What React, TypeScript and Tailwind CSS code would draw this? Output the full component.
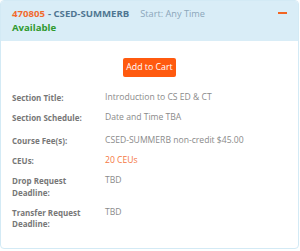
const rowsA = [
  { label: "Section Title:", value: "Introduction to CS ED & CT" },
  { label: "Section Schedule:", value: "Date and Time TBA" },
];

const rowsB = [
  { label: "Course Fee(s):", value: "CSED-SUMMERB non-credit $45.00" },
  { label: "CEUs:", value: "20 CEUs", accent: true },
  { label: "Drop Request Deadline:", value: "TBD" },
  { label: "Transfer Request Deadline:", value: "TBD" },
];

function Row({ label, value, accent }: { label: string; value: string; accent?: boolean }) {
  return (
    <div className="grid grid-cols-[93px_1fr] text-[8px] leading-[11.5px]">
      <div className="w-[70px] font-bold text-[#777777]">{label}</div>
      <div className={accent ? "text-[8.6px] text-[#f5773f]" : "text-[8.6px] text-[#8a8a8a]"}>{value}</div>
    </div>
  );
}

export default function App() {
  return (
    <div className="h-[251px] w-[300px] bg-white font-['Open_Sans',sans-serif]">
      <div className="h-[249px] w-[299px] overflow-hidden rounded-[4px] border border-[#d3eaf5] bg-white">
        <div className="relative h-[40px] bg-[#d9edf7] px-[11px] pt-[6px] text-[9.6px] leading-[14px]">
          <div className="flex items-center">
            <span className="font-bold text-[#f26a2e]">470805</span>
            <span className="ml-[3px] font-bold text-[#4f7692]">- CSED-SUMMERB</span>
            <span className="ml-[11px] text-[9.2px] text-[#8ba6ba]">Start: Any Time</span>
          </div>
          <div className="font-bold text-[#2f9a2f]">Available</div>
          <span className="absolute left-[277px] top-[11px] h-[2px] w-[9px] bg-[#f26522]" />
        </div>
        <div className="flex flex-col px-[11px] pt-[17px]">
          <div className="flex justify-center">
            <button className="h-[19px] w-[53px] rounded-[2px] bg-[#ff5a0f] text-[8.8px] text-white">
              Add to Cart
            </button>
          </div>
          <div className="mt-[15px] flex flex-col gap-[8.5px]">
            {rowsA.map((r) => (
              <Row key={r.label} {...r} />
            ))}
          </div>
          <div className="mt-[11.5px] flex flex-col gap-[8.5px]">
            {rowsB.map((r) => (
              <Row key={r.label} {...r} />
            ))}
          </div>
        </div>
      </div>
    </div>
  );
}
